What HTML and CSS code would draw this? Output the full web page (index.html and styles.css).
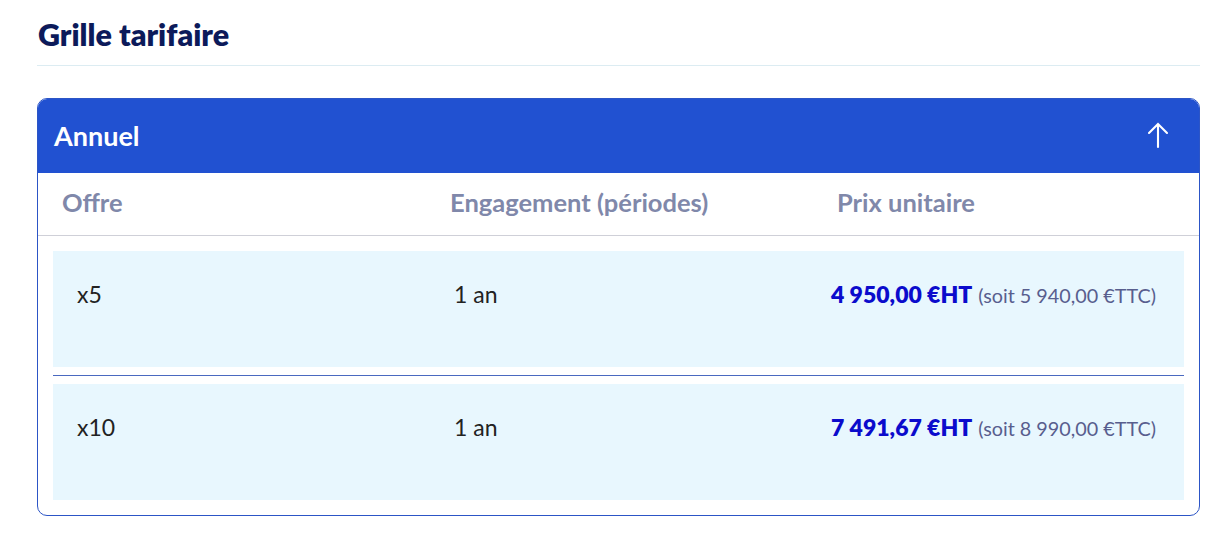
FILE: index.html
```html
<!DOCTYPE html>
<html lang="fr">
<head>
<meta charset="utf-8">
<title>Grille tarifaire</title>
<link rel="stylesheet" href="styles.css">
</head>
<body>
<section class="pricing">
  <h2 class="pricing-title">Grille tarifaire</h2>
  <div class="card">
    <div class="card-header">
      <span class="card-title">Annuel</span>
      <svg class="arrow" width="22" height="28" viewBox="0 0 22 28" aria-hidden="true">
        <path d="M11 26V3M2 12L11 3L20 12" fill="none" stroke="#fff" stroke-width="2.1" stroke-linecap="round" stroke-linejoin="miter"/>
      </svg>
    </div>
    <div class="col-heads">
      <div class="col">Offre</div>
      <div class="col">Engagement (périodes)</div>
      <div class="col">Prix unitaire</div>
    </div>
    <div class="rows">
      <div class="row">
        <div class="cell">x5</div>
        <div class="cell">1 an</div>
        <div class="cell price"><strong>4 950,00 €HT</strong> <span class="ttc">(soit 5 940,00 €TTC)</span></div>
      </div>
      <div class="sep"></div>
      <div class="row">
        <div class="cell">x10</div>
        <div class="cell">1 an</div>
        <div class="cell price"><strong>7 491,67 €HT</strong> <span class="ttc">(soit 8 990,00 €TTC)</span></div>
      </div>
    </div>
  </div>
</section>
</body>
</html>
```
FILE: styles.css
```css
* { box-sizing: border-box; }
html, body { margin: 0; padding: 0; background: #fff; }
body { font-family: "Lato", "Open Sans", sans-serif; color: #222; }

.pricing { padding: 16px 20px 0 37px; }

.pricing-title {
  margin: 0;
  font-size: 30.5px;
  line-height: 36px;
  font-weight: 800;
  color: #0c1a5a;
  padding-left: 1px;
  padding-bottom: 13px;
  border-bottom: 1px solid #dcecf2;
}

.card {
  margin-top: 32px;
  width: 1163px;
  border: 1px solid #2c55c6;
  border-radius: 10px;
  overflow: hidden;
}

.card-header {
  background: #2151d1;
  height: 75px;
  margin-top: -1px;
  display: flex;
  align-items: center;
  justify-content: space-between;
  padding: 0 30px 0 16px;
}
.card-title {
  color: #fff;
  font-size: 27px;
  font-weight: 700;
}
.arrow { display: block; margin-top: -2px; }

.col-heads {
  display: grid;
  grid-template-columns: 388px 387px 1fr;
  height: 63px;
  align-items: center;
  padding-bottom: 4px;
  border-bottom: 1px solid #cfd0d8;
}
.col {
  padding-left: 24px;
  font-size: 25.5px;
  font-weight: 700;
  color: #8088aa;
}

.rows { padding: 15px 15px 15px 15px; }

.row {
  display: grid;
  grid-template-columns: 1fr 1fr 1fr;
  height: 116px;
  background: #e8f7fe;
  padding-top: 30px;
}
.cell {
  padding: 0 24px;
  font-size: 23px;
  line-height: 26px;
  color: #222;
}
.price {
  text-align: right;
  padding-right: 28px;
  white-space: nowrap;
}
.price strong {
  color: #0b0bcc;
  font-weight: 800;
  font-size: 23px;
}
.ttc {
  color: #585e8e;
  font-size: 19.8px;
}

.sep {
  margin: 8px 0;
  height: 0;
  border-top: 1px solid #4a69c0;
}
```
